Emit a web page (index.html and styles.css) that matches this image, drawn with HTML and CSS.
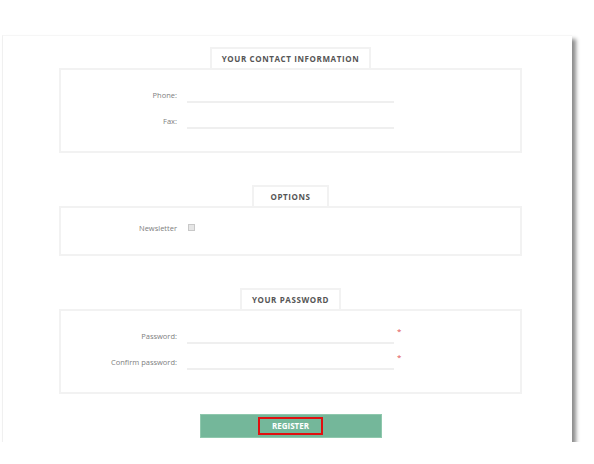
FILE: index.html
```html
<!DOCTYPE html>
<html lang="en">
<head>
    <meta charset="UTF-8">
    <meta name="viewport" content="width=device-width, initial-scale=1.0">
    <title>Register</title>
    <link rel="stylesheet" href="styles.css">
</head>
<body>
    <div class="sheet">
        <!-- Contact section -->
        <div class="section">
            <div class="section-title">Your contact information</div>
            <div class="section-box box-tall">
                <div class="row">
                    <label for="phone">Phone:</label>
                    <input type="text" id="phone" />
                </div>
                <div class="row">
                    <label for="fax">Fax:</label>
                    <input type="text" id="fax" />
                </div>
            </div>
        </div>

        <!-- Options section -->
        <div class="section">
            <div class="section-title">Options</div>
            <div class="section-box box-short">
                <div class="row">
                    <label for="newsletter">Newsletter</label>
                    <span class="check" id="newsletter"></span>
                </div>
            </div>
        </div>

        <!-- Password section -->
        <div class="section">
            <div class="section-title">Your password</div>
            <div class="section-box box-tall">
                <div class="row">
                    <label for="password">Password:</label>
                    <input type="password" id="password" />
                    <span class="required">*</span>
                </div>
                <div class="row">
                    <label for="confirm">Confirm password:</label>
                    <input type="password" id="confirm" />
                    <span class="required">*</span>
                </div>
            </div>
        </div>

        <div class="actions">
            <button class="register"><span class="highlight">Register</span></button>
        </div>
    </div>
</body>
</html>
```

FILE: styles.css
```css
/* Page */
body {
    margin: 0;
    background-color: #ffffff;
    font-family: "Open Sans", Arial, sans-serif;
    color: #888888;
}

/* The screenshot of the page, with its drop shadow */
.sheet {
    margin: 35px 0 0 2px;
    width: 570px;
    height: 407px;
    background-color: #ffffff;
    border-top: 1px solid #f6f6f6;
    border-left: 1px solid #f0f0f0;
    box-shadow: 4px 4px 4px rgba(0, 0, 0, 0.45);
    padding: 11px 50px 0 56px;
    box-sizing: border-box;
}

/* Each section: a tab on top of a box */
.section {
    display: flex;
    flex-direction: column;
    align-items: center;
    margin-bottom: 32px;
}

.section-title {
    min-width: 77px;
    height: 21px;
    line-height: 20px;
    padding: 0 10px;
    border: 2px solid #f2f2f2;
    border-bottom: none;
    box-sizing: border-box;
    text-align: center;
    font-size: 8px;
    font-weight: bold;
    letter-spacing: 0.6px;
    text-transform: uppercase;
    color: #555555;
}

.section-box {
    align-self: stretch;
    border: 2px solid #f2f2f2;
    display: flex;
    flex-direction: column;
    gap: 9px;
    box-sizing: border-box;
}

.box-tall {
    height: 85px;
    padding-top: 16px;
}

.box-short {
    height: 50px;
    padding-top: 11px;
}

/* Label + field rows */
.row {
    display: flex;
    align-items: center;
    height: 17px;
}

.row label {
    width: 116px;
    margin-right: 10px;
    text-align: right;
    font-size: 7.5px;
    color: #7e7e7e;
}

.row input {
    width: 207px;
    height: 17px;
    padding: 0;
    border: none;
    border-bottom: 2px solid #efefef;
    box-sizing: border-box;
    outline: none;
}

.check {
    width: 5px;
    height: 5px;
    margin-left: 1px;
    border: 1px solid #c8c8c8;
    background-color: #e6e6e6;
}

.required {
    align-self: flex-start;
    margin: 0 0 0 3px;
    font-size: 8px;
    line-height: 8px;
    color: #e05050;
}

/* Register button */
.actions {
    text-align: center;
    margin-top: -12px;
}

.register {
    width: 182px;
    height: 24px;
    padding: 0;
    background-color: #74b79a;
    border: 1px solid #8fc8ad;
    color: #ffffff;
    font-family: "Open Sans", Arial, sans-serif;
    font-size: 8px;
    font-weight: bold;
    text-transform: uppercase;
    vertical-align: top;
}

.highlight {
    display: inline-block;
    width: 61px;
    height: 14px;
    line-height: 14px;
    border: 2px solid #e01010;
}
```
